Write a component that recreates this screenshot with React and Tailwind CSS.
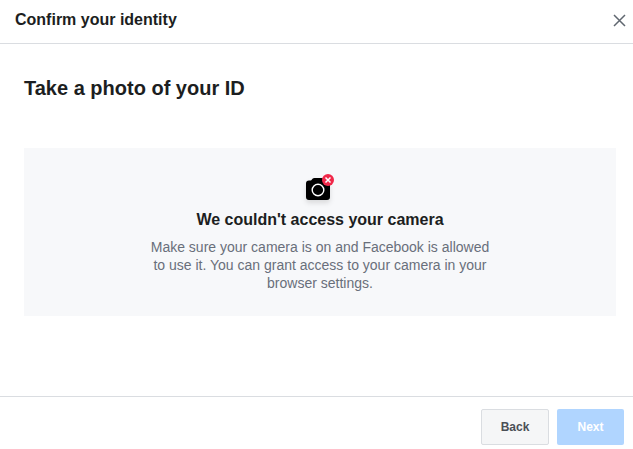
function CloseIcon() {
  return (
    <svg width="13" height="13" viewBox="0 0 13 13" fill="none" aria-hidden="true">
      <path d="M1 1L12 12M12 1L1 12" stroke="#606770" strokeWidth="1.5" />
    </svg>
  );
}

function CameraBlockedIcon() {
  return (
    <svg width="40" height="38" viewBox="0 0 40 38" fill="none" aria-hidden="true">
      <defs>
        <filter id="shadow" x="-40%" y="-40%" width="180%" height="190%">
          <feDropShadow dx="0" dy="3" stdDeviation="2.5" floodColor="#000" floodOpacity="0.12" />
        </filter>
      </defs>
      <path
        filter="url(#shadow)"
        fill="#020203"
        d="M9 8.500h1.500c.7 0 1-.3 1.400-.9l.6-.8C13 6.300 13.600 6 14.500 6h7c.9 0 1.500.3 2 .8l.6.8c.4.600.7.900 1.400.900H27c2 0 3 1 3 3V25c0 2-1 3-3 3H9c-2 0-3-1-3-3V11.500c0-2 1-3 3-3z"
      />
      <circle cx="18" cy="18" r="5.800" stroke="#fff" strokeWidth="1.400" />
      <circle cx="28" cy="8" r="6" fill="#f02849" />
      <path d="M25.500 5.500l5 5M30.500 5.500l-5 5" stroke="#fff" strokeWidth="1.500" />
    </svg>
  );
}

export default function App() {
  return (
    <div
      role="dialog"
      aria-labelledby="dialog-title"
      className="flex min-h-screen flex-col bg-white font-['Liberation_Sans',Arial,sans-serif] text-[#1c1e21]"
    >
      <header className="flex h-11 items-center justify-between border-b border-[#dadde1] pr-[7px] pl-[15px]">
        <h1 id="dialog-title" className="pb-[3px] text-base leading-5 font-bold">
          Confirm your identity
        </h1>
        <button type="button" aria-label="Close" className="pb-[3px]">
          <CloseIcon />
        </button>
      </header>

      <main className="flex-1 pt-8 pr-[17px] pb-20 pl-6">
        <h2 className="text-xl leading-6 font-bold">Take a photo of your ID</h2>
        <section className="mt-12 flex flex-col items-center bg-[#f7f8fa] p-6 text-center">
          <CameraBlockedIcon />
          <h3 className="text-base leading-5 font-bold">We couldn't access your camera</h3>
          <p className="mt-2 max-w-[344px] text-sm leading-[18px] text-[#696f7b]">
            Make sure your camera is on and Facebook is allowed to use it. You can grant access to
            your camera in your browser settings.
          </p>
        </section>
      </main>

      <footer className="flex justify-end gap-2 border-t border-[#dadde1] pt-3 pr-[9px] pb-1 text-xs font-bold">
        <button
          type="button"
          className="h-9 w-[68px] rounded-xs border border-[#dadde1] bg-[#f5f6f7] text-[#4b4f56]"
        >
          Back
        </button>
        <button type="button" disabled className="h-9 w-[67px] rounded-xs bg-[#b0d5ff] text-white">
          Next
        </button>
      </footer>
    </div>
  );
}
